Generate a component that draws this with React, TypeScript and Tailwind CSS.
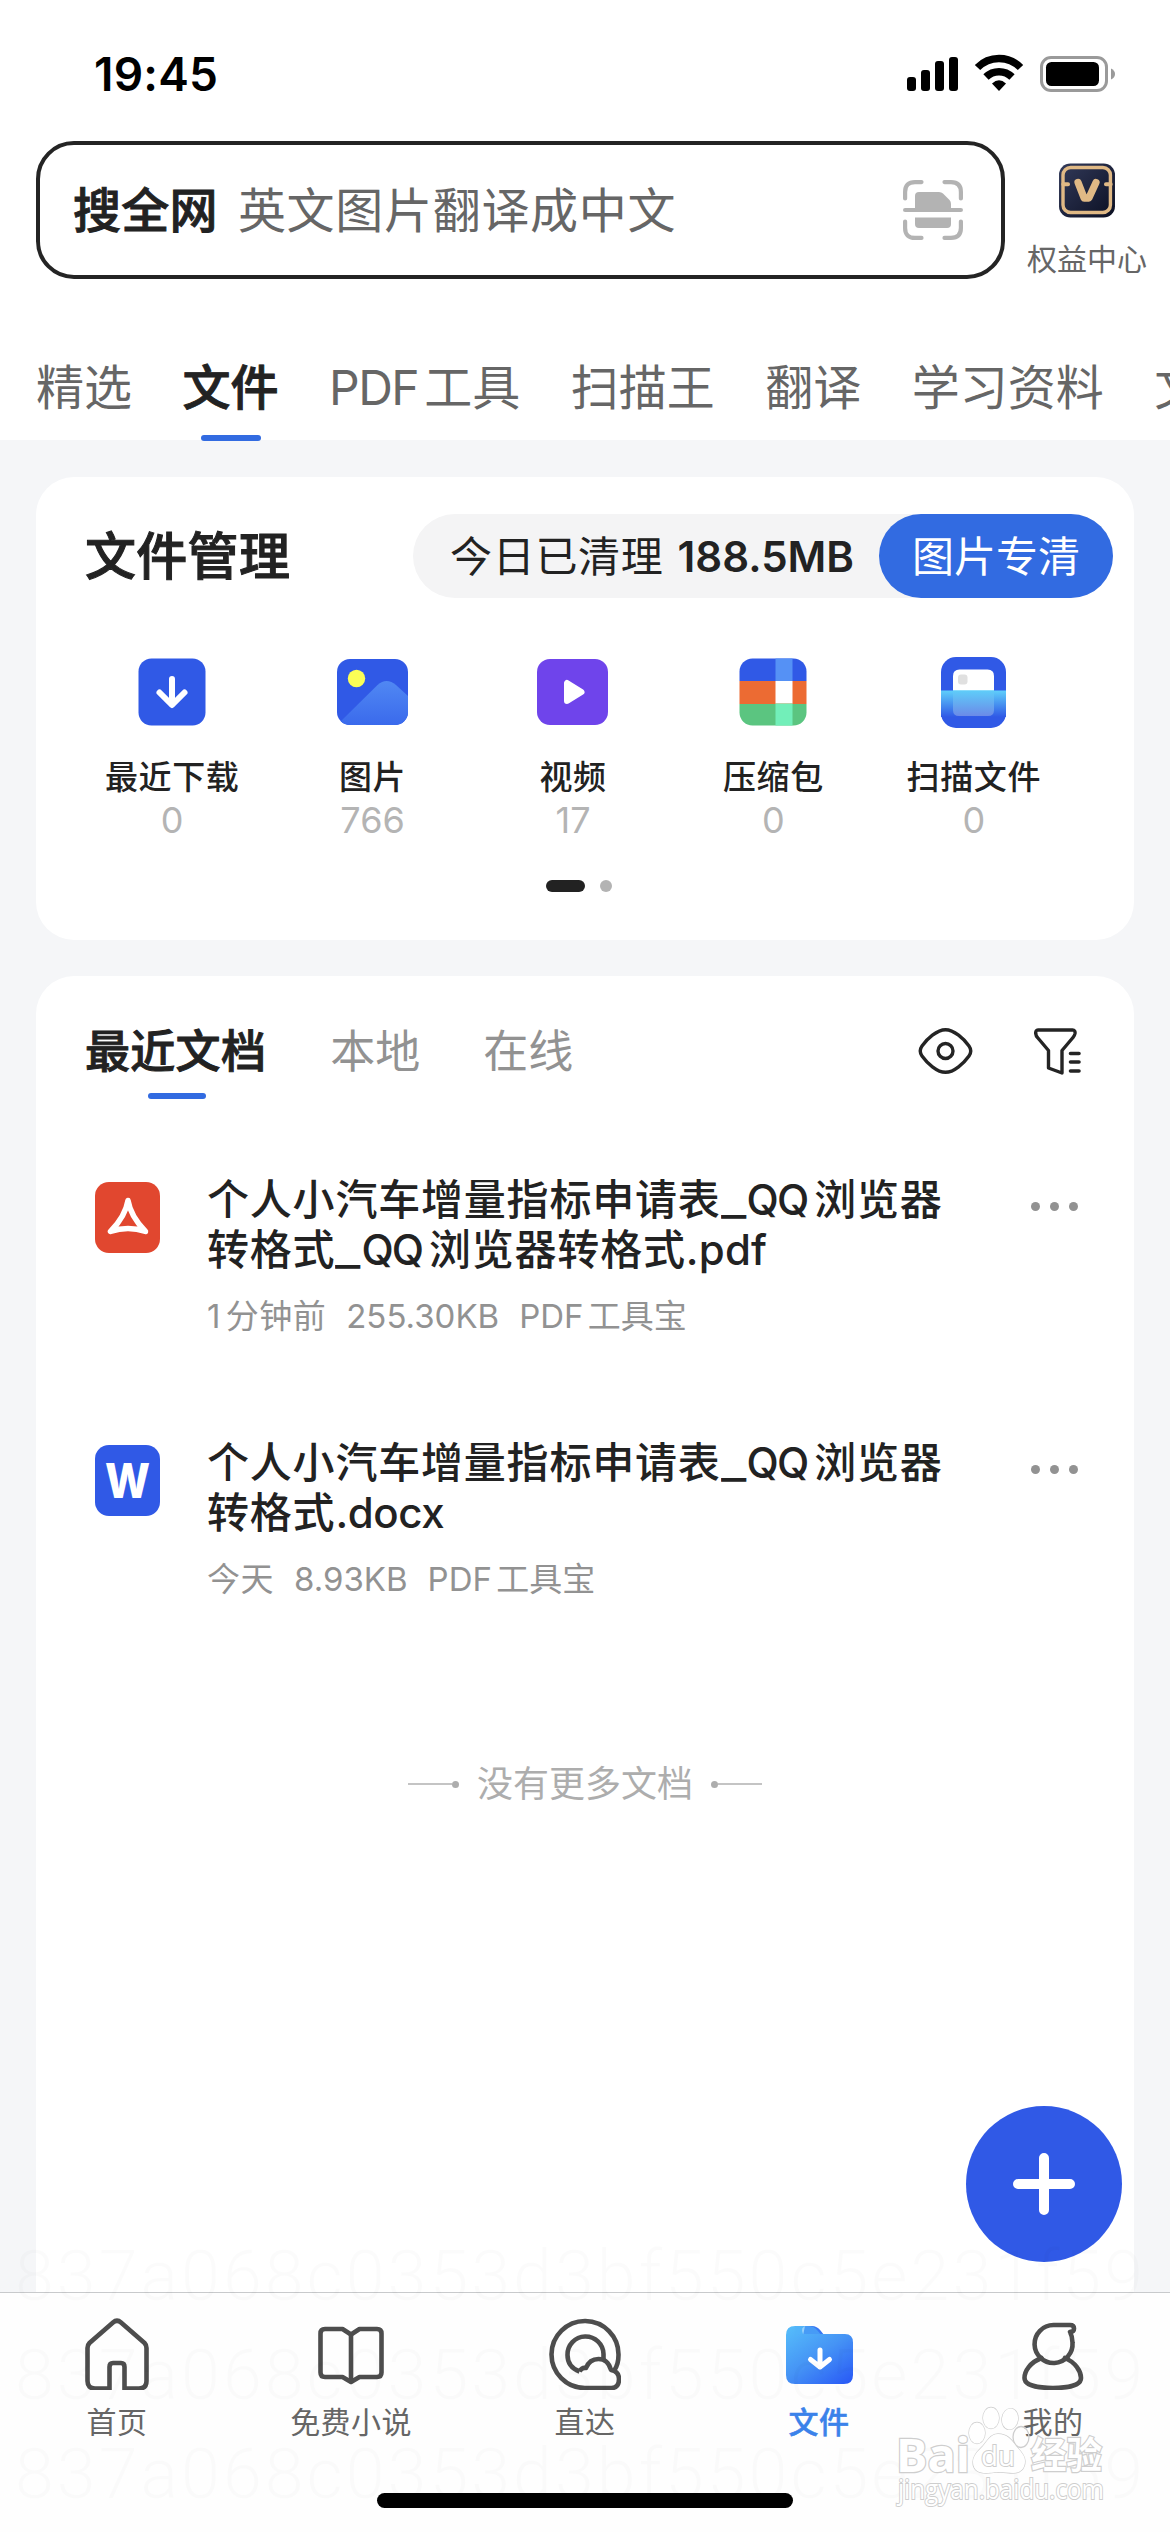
import { clsx } from 'clsx';
import type { ReactNode } from 'react';

const CHANNELS: { name: string; latin?: string }[] = [
  { name: '精选' },
  { name: '文件' },
  { name: '工具', latin: 'PDF' },
  { name: '扫描王' },
  { name: '翻译' },
  { name: '学习资料' },
  { name: '文库' },
];

const TRACE_ID = '837a068c0353d3bf550c5e231f59';

/* ---------- status bar ---------- */

function StatusBar() {
  return (
    <div className="flex h-[141px] items-start justify-between pt-[52px] pr-[54px] pl-[94px]">
      <span className="text-[46px] leading-[44px] font-semibold tracking-[0.2px] text-black">19:45</span>
      <svg className="h-[44px] w-[209px]" viewBox="0 0 209 44" fill="none">
        <g fill="#000">
          <rect x="0" y="25" width="9" height="14" rx="3" />
          <rect x="14" y="18" width="9" height="21" rx="3" />
          <rect x="28" y="9" width="9" height="30" rx="3" />
          <rect x="42" y="5" width="9" height="34" rx="3" />
        </g>
        <g stroke="#000" strokeWidth="7.5">
          <path d="M70.500 15.500a30 30 0 0 1 43 0" />
          <path d="M79 25a18.500 18.500 0 0 1 26 0" />
        </g>
        <path d="M92 39l-7-7.500q7-6.500 14 0z" fill="#000" />
        <rect x="134.500" y="5.500" width="65" height="33" rx="9.500" stroke="#9a9a9a" strokeWidth="3" />
        <rect x="139" y="10" width="53" height="24" rx="5.500" fill="#000" />
        <path d="M204 16.500q4 2 4 5.500t-4 5.500z" fill="#9a9a9a" />
      </svg>
    </div>
  );
}

/* ---------- header ---------- */

function ScanIcon() {
  return (
    <svg className="size-[60px]" viewBox="0 0 60 60" fill="none">
      <g stroke="#b3b3b3" strokeWidth="4.200" strokeLinecap="round">
        <path d="M2.100 18.500V12Q2.100 2.100 12 2.100h6.500" />
        <path d="M41.500 2.100H48q9.900 0 9.900 9.900v6.500" />
        <path d="M57.900 41.500V48q0 9.900-9.900 9.900h-6.500" />
        <path d="M18.500 57.900H12q-9.900 0-9.900-9.900v-6.500" />
        <path d="M2.100 30h55.800" />
      </g>
      <path d="M12 30V16q0-4 4-4h20q2.500 0 4 1.500l6.500 6.500q1.500 1.500 1.500 4v6z" fill="#b3b3b3" />
      <path d="M12 37.500h36v6.500q0 4-4 4H16q-4 0-4-4z" fill="#b3b3b3" />
    </svg>
  );
}

function VipIcon() {
  return (
    <svg className="h-[58px] w-[60px]" viewBox="0 0 60 58" fill="none">
      <defs>
        <linearGradient id="vip" x1="0" y1="0" x2="1" y2="1">
          <stop offset="0" stopColor="#323a5a" />
          <stop offset="1" stopColor="#0b0f22" />
        </linearGradient>
      </defs>
      <rect x="0.500" y="0.500" width="59" height="57" rx="12" fill="url(#vip)" />
      <rect x="4.700" y="4.700" width="50" height="47.500" rx="8" stroke="#e0b985" strokeWidth="3.600" />
      <path d="M5 22.500h5M50 22.500h5" stroke="#e0b985" strokeWidth="4.200" strokeLinecap="round" />
      <path
        d="M20.500 20.500L27 37h5L39.500 20.500"
        stroke="#e0b985"
        strokeWidth="7.600"
        strokeLinecap="round"
        strokeLinejoin="round"
      />
    </svg>
  );
}

function Header() {
  return (
    <div className="flex h-[138px] pl-9">
      <div className="flex w-[969px] items-center rounded-[38px] border-[4.500px] border-[#242424] pr-[38px] pl-[33px]">
        <span className="pt-px text-[48px] font-medium tracking-[0.3px] text-[#222] [-webkit-text-stroke:0.9px_#222]">
          搜全网
        </span>
        <span className="ml-[20px] flex-1 pt-px text-[48px] tracking-[0.7px] text-[#666]">英文图片翻译成中文</span>
        <ScanIcon />
      </div>
      <div className="ml-[20px] flex w-[124px] flex-col items-center pt-[22px]">
        <VipIcon />
        <span className="mt-[21px] text-[30px] leading-[40px] whitespace-nowrap text-[#666]">权益中心</span>
      </div>
    </div>
  );
}

function Channels() {
  return (
    <nav className="mt-[56px] flex h-[105px] gap-[50.5px] pl-9 text-[48px] whitespace-nowrap text-[#666]">
      {CHANNELS.map(({ name, latin }) => {
        const active = name === '文件';
        return (
          <div
            key={name}
            className={clsx(
              'relative flex shrink-0 items-center',
              active && 'font-medium text-[#222] [-webkit-text-stroke:0.9px_#222]',
            )}
          >
            {latin && <span className="mr-[6px] tracking-[-1.500px]">{latin}</span>}
            {name}
            {active && (
              <span className="absolute -bottom-px left-[18px] h-[6px] w-[60px] rounded-[3px] bg-[#326be1]" />
            )}
          </div>
        );
      })}
    </nav>
  );
}

/* ---------- file manager card ---------- */

function DownloadTile() {
  return (
    <svg className="size-[68px]" viewBox="0 0 68 68" fill="none">
      <rect x="0.500" y="0.500" width="67" height="67" rx="13" fill="#3059e6" />
      <path
        d="M34 21v24M21.500 34.500L34 47l12.500-12.500"
        stroke="#fff"
        strokeWidth="6"
        strokeLinecap="round"
        strokeLinejoin="round"
      />
    </svg>
  );
}

function PhotoTile() {
  return (
    <svg className="h-[66px] w-[71px]" viewBox="0 0 71 66" fill="none">
      <defs>
        <linearGradient id="hill" x1="0" y1="0" x2="0" y2="1">
          <stop offset="0" stopColor="#5088f3" />
          <stop offset="1" stopColor="#3a6aec" />
        </linearGradient>
        <clipPath id="photo">
          <rect width="71" height="66" rx="13" />
        </clipPath>
      </defs>
      <g clipPath="url(#photo)">
        <rect width="71" height="66" fill="#3059e6" />
        <path d="M0 66L40.500 26Q49.500 18 59 26L71 37v29z" fill="url(#hill)" />
        <circle cx="19.500" cy="19.500" r="8.700" fill="#fbfe56" />
      </g>
    </svg>
  );
}

function VideoTile() {
  return (
    <svg className="h-[66px] w-[71px]" viewBox="0 0 71 66" fill="none">
      <rect width="71" height="66" rx="13" fill="#6f44eb" />
      <path
        d="M30 24v18l14.500-9z"
        fill="#fff"
        stroke="#fff"
        strokeWidth="6"
        strokeLinejoin="round"
      />
    </svg>
  );
}

function ArchiveTile() {
  return (
    <svg className="size-[68px]" viewBox="0 0 68 68">
      <defs>
        <clipPath id="archive">
          <rect x="0.500" y="0.500" width="67" height="67" rx="13" />
        </clipPath>
      </defs>
      <g clipPath="url(#archive)">
        <path d="M0 0h68v23H0z" fill="#3059e6" />
        <path d="M0 23h68v23H0z" fill="#ec6b33" />
        <path d="M0 46h68v22H0z" fill="#5bc580" />
        <path d="M36.500 0h17v23h-17z" fill="#5591f5" />
        <path d="M36.500 23h17v22.500h-17z" fill="#fff" />
        <path d="M36.500 45.500h17V68h-17z" fill="#72efb9" />
      </g>
    </svg>
  );
}

function ScanTile() {
  return (
    <svg className="h-[71px] w-[65px]" viewBox="0 0 65 71">
      <defs>
        <linearGradient id="beam" x1="0" y1="0" x2="0" y2="1">
          <stop offset="0" stopColor="#5fcffb" />
          <stop offset="1" stopColor="#3059e6" />
        </linearGradient>
        <linearGradient id="sheet" x1="0" y1="0" x2="0" y2="1">
          <stop offset="0" stopColor="#5fcdf9" />
          <stop offset="1" stopColor="#6b8ae8" />
        </linearGradient>
      </defs>
      <rect width="65" height="71" rx="15" fill="#3059e6" />
      <path d="M12 34V19q0-6.500 6.500-6.500h28q6.500 0 6.500 6.500v15z" fill="#fff" />
      <rect x="17" y="17.500" width="9.500" height="10" rx="3" fill="#e0e0e0" />
      <path d="M0 33.500h65V60H0z" fill="url(#beam)" />
      <path d="M12 33.500h41V53q0 6-6 6H18q-6 0-6-6z" fill="url(#sheet)" />
    </svg>
  );
}

const TOOLS: { label: string; count: number; icon: ReactNode }[] = [
  { label: '最近下载', count: 0, icon: <DownloadTile /> },
  { label: '图片', count: 766, icon: <PhotoTile /> },
  { label: '视频', count: 17, icon: <VideoTile /> },
  { label: '压缩包', count: 0, icon: <ArchiveTile /> },
  { label: '扫描文件', count: 0, icon: <ScanTile /> },
];

function FileManager() {
  return (
    <section className="mx-9 mt-[37px] h-[463px] rounded-[38px] bg-white pt-[37px]">
      <div className="flex h-[84px] items-center justify-between pr-[21px] pl-[49px]">
        <h2 className="pt-[2px] text-[51px] font-medium tracking-[0.3px] text-[#222] [-webkit-text-stroke:1px_#222]">
          文件管理
        </h2>
        <div className="flex h-full w-[700px] items-center justify-between rounded-full bg-[#f4f4f5] pl-[37px] text-[42px] whitespace-nowrap">
          <span className="text-[#222]">
            <span className="tracking-[0.7px]">今日已清理</span>
            <b className="ml-[14px] font-semibold">188.5MB</b>
          </span>
          <span className="flex h-full w-[234px] items-center justify-center rounded-full bg-[#326be1] text-white">
            图片专清
          </span>
        </div>
      </div>

      <ul className="mt-[58px] ml-[36px] grid w-[1002px] grid-cols-5">
        {TOOLS.map((tool) => (
          <li key={tool.label} className="flex flex-col items-center">
            <span className="flex h-[72px] items-center">{tool.icon}</span>
            <span className="mt-[29px] text-[33px] leading-[40px] font-medium tracking-[0.6px] text-[#222]">
              {tool.label}
            </span>
            <span className="-mt-px text-[36px] leading-[48px] text-[#b4b4b4]">{tool.count}</span>
          </li>
        ))}
      </ul>

      <div className="mt-9 flex items-center gap-[15px] pl-[510px]">
        <span className="h-[12px] w-[39px] rounded-full bg-[#222]" />
        <span className="size-[12px] rounded-full bg-[#b3b3b3]" />
      </div>
    </section>
  );
}

/* ---------- recent documents card ---------- */

function EyeIcon() {
  return (
    <svg className="h-[46px] w-[55px]" viewBox="0 0 55 46" fill="none" stroke="#242424" strokeWidth="3.400">
      <path d="M4 18C9 11 19 1.700 27.500 1.700S46 11 51 18q3.500 5 0 10C46 35 36 44.300 27.500 44.300S9 35 4 28q-3.500-5 0-10z" />
      <circle cx="27.500" cy="23" r="7.500" />
    </svg>
  );
}

function FilterIcon() {
  return (
    <svg
      className="h-[47px] w-[47px]"
      viewBox="0 0 47 47"
      fill="none"
      stroke="#242424"
      strokeWidth="3.400"
      strokeLinecap="round"
      strokeLinejoin="round"
    >
      <path d="M4 2h34.500q3 0 2.500 3.500Q40.500 8 39 9.500L28 22.500v22.500L14.500 40V22.500L3.500 9.500Q2 8 1.700 5.500 1.500 2 4 2z" />
      <path d="M36.500 25.500h8.500M36.500 34h8.500M36.500 43h8.500" strokeWidth="3.600" />
    </svg>
  );
}

function PdfIcon() {
  return (
    <svg className="h-[71px] w-[65px]" viewBox="0 0 65 71" fill="none">
      <rect width="65" height="71" rx="14" fill="#e1472f" />
      <path
        d="M33 18.500Q30.500 34 15.500 49.500Q33 43.500 50.500 49.500Q35.500 34 33 18.500z"
        stroke="#fff"
        strokeWidth="5.500"
        strokeLinejoin="round"
      />
    </svg>
  );
}

function WordIcon() {
  return (
    <svg className="h-[71px] w-[65px]" viewBox="0 0 65 71">
      <rect width="65" height="71" rx="14" fill="#3059e6" />
      <text
        x="10"
        y="53"
        fontSize="48"
        fontWeight="800"
        textLength="45"
        lengthAdjust="spacingAndGlyphs"
        fill="#fff"
        className="font-[Inter]"
      >
        W
      </text>
    </svg>
  );
}

// Wide underscore plus a tight "QQ", with a hair of space before the CJK text.
function QQ() {
  return (
    <>
      <i className="inline-block w-[26px] origin-left scale-x-[1.3] not-italic">_</i>
      <i className="mr-[7px] tracking-[-2px] not-italic">QQ</i>
    </>
  );
}

const FILES: { icon: ReactNode; tail: ReactNode; meta: string[] }[] = [
  {
    icon: <PdfIcon />,
    tail: (
      <>
        转格式
        <QQ />
        浏览器转格式<span className="tracking-[0.2px]">.pdf</span>
      </>
    ),
    meta: ['1 分钟前', '255.30KB', 'PDF 工具宝'],
  },
  {
    icon: <WordIcon />,
    tail: (
      <>
        转格式<span className="tracking-[-0.4px]">.docx</span>
      </>
    ),
    meta: ['今天', '8.93KB', 'PDF 工具宝'],
  },
];

function RecentDocs() {
  return (
    <section className="mx-9 mt-9 flex-1 rounded-t-[38px] bg-white pt-[27px]">
      <div className="flex h-[96px] items-center pr-[53px] pl-[49px] text-[45px] text-[#929292]">
        <span className="relative flex h-full items-center pt-px font-medium tracking-[0.3px] text-[#222] [-webkit-text-stroke:0.9px_#222]">
          最近文档
          <span className="absolute bottom-0 left-[63px] h-[6px] w-[58px] rounded-full bg-[#326be1]" />
        </span>
        <span className="ml-[64px] pt-px">本地</span>
        <span className="ml-[63px] flex-1 pt-px">在线</span>
        <EyeIcon />
        <span className="ml-[61px]">
          <FilterIcon />
        </span>
      </div>

      <ul className="mt-[75px] flex flex-col gap-[99px] pr-[56px] pl-[59px]">
        {FILES.map((file, i) => (
          <li key={i} className="flex">
            <span className="mt-[8px]">{file.icon}</span>
            <div className="ml-[47px] flex-1 pt-px whitespace-nowrap">
              <p className="text-[42px] leading-[50px] font-medium tracking-[0.8px] text-[#222]">
                个人小汽车增量指标申请表
                <QQ />
                浏览器
                <br />
                {file.tail}
              </p>
              <p className="mt-[19px] flex gap-[20px] text-[33px] leading-[44px] [word-spacing:-5px] text-[#929292]">
                {file.meta.map((m, n) => (
                  <span key={m} className={clsx(n === 0 && 'tracking-[0.5px]')}>
                    {m}
                  </span>
                ))}
              </p>
            </div>
            <span className="mt-[28px] flex h-[10px] gap-[10px]">
              <i className="size-[9px] rounded-full bg-[#929292]" />
              <i className="size-[9px] rounded-full bg-[#929292]" />
              <i className="size-[9px] rounded-full bg-[#929292]" />
            </span>
          </li>
        ))}
      </ul>

      <div className="mt-[161px] flex items-center justify-center text-[36px] leading-[44px] text-[#adadad]">
        <span className="h-[2px] w-[44px] bg-[#c4c4c4]" />
        <span className="size-[7px] rounded-full bg-[#adadad]" />
        <span className="mx-[18px]">没有更多文档</span>
        <span className="size-[7px] rounded-full bg-[#adadad]" />
        <span className="h-[2px] w-[44px] bg-[#c4c4c4]" />
      </div>
    </section>
  );
}

/* ---------- bottom bar ---------- */

const navStroke = {
  className: 'size-[72px]',
  viewBox: '0 0 72 72',
  fill: 'none',
  stroke: '#4d4d4d',
  strokeWidth: 4.6,
  strokeLinejoin: 'round',
} as const;

function HomeIcon() {
  return (
    <svg {...navStroke}>
      <path
        d="M28.500 70.500H14q-7.500 0-7.500-7.500V30q0-3 2-5L32 4.500q4-3.500 8 0L63.500 25q2 2 2 5v33q0 7.500-7.500 7.500H43.500V49q0-4-3.500-4h-8q-3.500 0-3.500 4z"
        strokeLinejoin="miter"
      />
    </svg>
  );
}

function BookIcon() {
  return (
    <svg {...navStroke}>
      <path d="M36 16.500L27.500 11H10q-4.500 0-4.500 4.500v39q0 4.500 4.500 4.500h17.500l8.500 5 8.500-5H62q4.500 0 4.500-4.500v-39Q66.500 11 62 11H44.500z" />
      <path d="M36 16.500V64" />
    </svg>
  );
}

function DirectIcon() {
  return (
    <svg {...navStroke}>
      <path d="M65.500 52Q69.500 46 69.500 37A33.500 33.500 0 1 0 36 70h26.500q7.500 0 7.500-9 0-7.500-8-9-3-11-12.500-11-9 0-12.500 9-4-1-6.500 3.500" />
      <path d="M30.500 53.500Q18.500 49 18.500 37a18 18 0 0 1 36-1v7" />
    </svg>
  );
}

function FolderIcon() {
  return (
    <svg className="size-[72px]" viewBox="0 0 72 72" fill="none">
      <defs>
        <linearGradient id="folder" x1="0.100" y1="0" x2="0.900" y2="1">
          <stop offset="0" stopColor="#55bbfa" />
          <stop offset="0.500" stopColor="#4593f5" />
          <stop offset="1" stopColor="#2a5cf6" />
        </linearGradient>
      </defs>
      <path d="M22 8h7q5 0 8.500 4.500l4 5H20z" fill="#3878f3" />
      <path
        d="M12 8h11q-6 1-3 8h42q8 0 8 8.500V57q0 9-9 9H12q-9 0-9-9V17q0-9 9-9z"
        fill="url(#folder)"
      />
      <path d="M12 8h13q6 0 9 4l3.500 4H13z" fill="#52b2f9" opacity="0.600" />
      <path
        d="M37 32v17M27.500 41.500L37 49l9.500-7.500"
        stroke="#fff"
        strokeWidth="5"
        strokeLinecap="round"
        strokeLinejoin="round"
      />
    </svg>
  );
}

function MeIcon() {
  return (
    <svg {...navStroke} strokeLinecap="round">
      <path d="M53 14q2.500 4.500 2.500 10.500a19 19 0 1 1-19-17.500H53q4 0 4 3.500 0 3.500-4 3.500" />
      <path d="M24.500 40C13 44.500 7.500 53 7.500 60c0 7.500 14 10 28.500 10s28-2.500 28-10c0-7-5.500-15.500-16-20" />
    </svg>
  );
}

const NAV: { label: string; icon: ReactNode; active?: boolean }[] = [
  { label: '首页', icon: <HomeIcon /> },
  { label: '免费小说', icon: <BookIcon /> },
  { label: '直达', icon: <DirectIcon /> },
  { label: '文件', icon: <FolderIcon />, active: true },
  { label: '我的', icon: <MeIcon /> },
];

function BottomBar() {
  return (
    <footer className="h-[240px] border-t-[1.500px] border-[#c8cacc] bg-[#fefefe] pt-[25px]">
      <div className="grid grid-cols-5">
        {NAV.map((item) => (
          <div key={item.label} className="flex flex-col items-center">
            {item.icon}
            <span
              className={clsx(
                'mt-[14px] text-[30px] leading-[36px] tracking-[0.4px]',
                item.active
                  ? 'font-medium text-[#3b82ea] [-webkit-text-stroke:0.500px_#3b82ea]'
                  : 'text-[#666]',
              )}
            >
              {item.label}
            </span>
          </div>
        ))}
      </div>
      <div className="mx-auto mt-[53px] h-[15px] w-[416px] rounded-full bg-black" />
    </footer>
  );
}

/* ---------- overlays ---------- */

function TraceOverlay() {
  return (
    <svg
      className="pointer-events-none absolute top-[2232px] left-0 h-[300px] w-[1170px] font-[Roboto]"
      viewBox="0 0 1170 300"
      fill="#000"
      fillOpacity="0.014"
      fontSize="70"
      fontWeight="300"
    >
      {[68, 167, 266].map((y) => (
        <text key={y} x="15" y={y} textLength="1128">
          {TRACE_ID}
        </text>
      ))}
    </svg>
  );
}

function SourceMark() {
  return (
    <svg
      className="pointer-events-none absolute top-[2400px] left-[892px] h-[110px] w-[220px] font-['Open_Sans','Noto_Sans_CJK_SC',sans-serif]"
      viewBox="0 0 220 110"
      fill="#fff"
      stroke="#cecece"
      strokeWidth="2.400"
      paintOrder="stroke"
    >
      <g fontWeight="700">
        <text x="4" y="72" fontSize="46" textLength="74" lengthAdjust="spacingAndGlyphs">
          Bai
        </text>
        <text x="139" y="69" fontSize="37" textLength="71" lengthAdjust="spacingAndGlyphs">
          经验
        </text>
      </g>
      <g strokeWidth="1.300">
        <ellipse cx="85" cy="33" rx="8" ry="10.500" />
        <ellipse cx="99" cy="18" rx="8" ry="10.500" />
        <ellipse cx="118" cy="19" rx="8" ry="10.500" transform="rotate(8 118 19)" />
        <ellipse cx="129" cy="37" rx="8" ry="10.500" fill="none" />
        <path d="M106 34c-7 0-10 6-15 12-6 6-10 10-10 16 0 9 7 11 13 11s9-1 14-1 8 1 13 1c7 0 12-4 12-12 0-6-5-10-9-15-5-7-9-12-18-12z" />
      </g>
      <text x="89" y="66" fontSize="28" textLength="34" lengthAdjust="spacingAndGlyphs" strokeWidth="2">
        du
      </text>
      <text x="6" y="99" fontSize="27" textLength="206" lengthAdjust="spacingAndGlyphs" strokeWidth="2">
        jingyan.baidu.com
      </text>
    </svg>
  );
}

export default function App() {
  return (
    <div className="relative flex h-[2532px] w-[1170px] flex-col overflow-hidden bg-[#f5f6f8] font-[Inter,'Noto_Sans_CJK_SC',sans-serif]">
      <header className="bg-white">
        <StatusBar />
        <Header />
        <Channels />
      </header>
      <FileManager />
      <RecentDocs />
      <BottomBar />

      <button
        type="button"
        aria-label="新建"
        className="absolute top-[2106px] left-[966px] flex size-[156px] items-center justify-center rounded-full bg-[#3059e6]"
      >
        <svg className="size-[62px]" viewBox="0 0 62 62" stroke="#fff" strokeWidth="10" strokeLinecap="round">
          <path d="M31 5v52M5 31h52" />
        </svg>
      </button>

      <TraceOverlay />
      <SourceMark />
    </div>
  );
}
